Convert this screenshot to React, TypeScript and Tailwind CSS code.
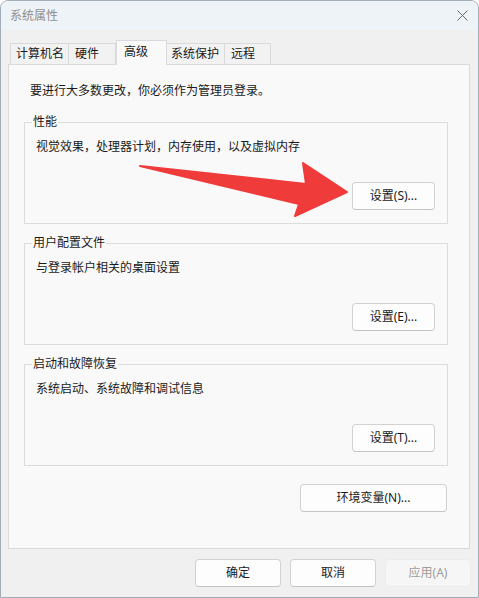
import React from "react";

const font = "font-['Noto_Sans','Noto_Sans_CJK_SC',sans-serif]";

function Btn({ children, w, disabled }: { children: React.ReactNode; w: string; disabled?: boolean }) {
  return (
    <div
      className={
        "h-[28px] rounded-[4px] border flex items-center justify-center leading-[16px] " +
        w +
        (disabled
          ? " bg-[#f6f6f6] border-[#ececec] text-[#9d9d9d]"
          : " bg-[#fdfdfd] border-[#d2d2d2] border-b-[#c4c4c4] text-[#1a1a1a]")
      }
    >
      {children}
    </div>
  );
}

function Group({ title, text, btn, mt }: { title: string; text: string; btn: string; mt: string }) {
  return (
    <div className={"relative border border-[#dcdcdc] pt-[16px] pl-[11px] pr-[12px] pb-[13px] " + mt}>
      <span className="absolute left-[7px] top-[-9px] px-[1px] bg-[#f9f9f9] leading-[16px]">{title}</span>
      <div className="leading-[16px]">{text}</div>
      <div className="flex justify-end mt-[27px]">
        <Btn w="w-[83px]">{btn}</Btn>
      </div>
    </div>
  );
}

export default function App() {
  return (
    <div
      className={
        "relative w-[479px] h-[598px] bg-[#f0f0f0] border border-[#a3adb8] rounded-t-[8px] overflow-hidden flex flex-col text-[12px] text-[#1a1a1a] " +
        font
      }
    >
      {/* title bar */}
      <div className="h-[29px] shrink-0 bg-[#eef3f8] flex items-center justify-between pl-[9px] pr-[10px]">
        <span className="text-[#8f8f8f] leading-[16px]">系统属性</span>
        <svg width="11" height="11" viewBox="0 0 11 11">
          <path d="M0.5 0.5L10.5 10.5M10.5 0.5L0.5 10.5" stroke="#6b6b6b" strokeWidth="1" />
        </svg>
      </div>

      {/* body */}
      <div className="flex flex-col pt-[10px]">
        {/* tabs */}
        <div className="flex items-end h-[24px] pl-[9px]">
          <div className="w-[59px] h-[21px] border border-b-0 border-[#dadada] bg-[#f2f2f2] pl-[5px] leading-[20px]">计算机名</div>
          <div className="w-[47px] h-[21px] border border-b-0 border-l-0 border-[#dadada] bg-[#f2f2f2] pl-[6px] leading-[20px]">硬件</div>
          <div className="relative z-10 w-[51px] h-[25px] mb-[-1px] border border-b-0 border-[#dadada] bg-[#f9f9f9] pl-[7px] leading-[22px]">高级</div>
          <div className="w-[58px] h-[21px] border border-b-0 border-l-0 border-[#dadada] bg-[#f2f2f2] pl-[4px] leading-[20px]">系统保护</div>
          <div className="w-[46px] h-[21px] border border-b-0 border-l-0 border-[#dadada] bg-[#f2f2f2] pl-[6px] leading-[20px]">远程</div>
        </div>

        {/* panel */}
        <div className="ml-[7px] w-[462px] h-[485px] border border-[#dadada] bg-[#f9f9f9] pt-[18px] pl-[15px] pr-[21px] flex flex-col">
          <div className="ml-[6px] leading-[16px]">要进行大多数更改，你必须作为管理员登录。</div>
          <Group mt="mt-[23px]" title="性能" text="视觉效果，处理器计划，内存使用，以及虚拟内存" btn="设置(S)..." />
          <Group mt="mt-[19px]" title="用户配置文件" text="与登录帐户相关的桌面设置" btn="设置(E)..." />
          <Group mt="mt-[19px]" title="启动和故障恢复" text="系统启动、系统故障和调试信息" btn="设置(T)..." />
          <div className="flex justify-end mt-[18px] pr-[1px]">
            <Btn w="w-[147px]">环境变量(N)...</Btn>
          </div>
        </div>

        {/* bottom buttons */}
        <div className="flex justify-end gap-[9px] mt-[10px] pr-[7px]">
          <Btn w="w-[86px]">确定</Btn>
          <Btn w="w-[86px]">取消</Btn>
          <Btn w="w-[86px]" disabled>应用(A)</Btn>
        </div>
      </div>

      {/* annotation arrow */}
      <svg
        className="absolute left-[-1px] top-[-1px] pointer-events-none"
        width="479"
        height="598"
        viewBox="0 0 479 598"
      >
        <polygon
          points="140,166 306,184 303,163 347,192 295,216 299,204"
          fill="#f03b3b"
          stroke="#f03b3b"
          strokeWidth="2"
          strokeLinejoin="round"
        />
      </svg>
    </div>
  );
}
